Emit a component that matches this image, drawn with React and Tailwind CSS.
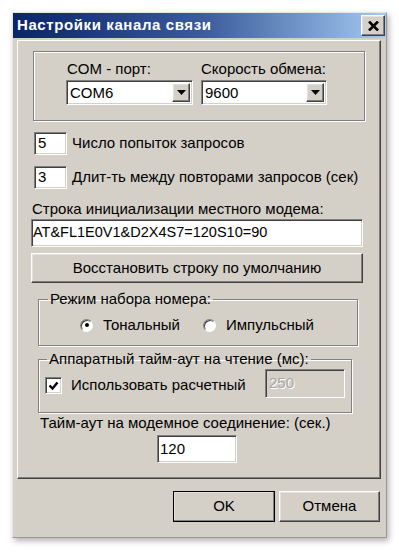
import React from 'react';

const font = "font-['Liberation_Sans',Arial,sans-serif]";

const sunken =
  'border border-t-[#808080] border-l-[#808080] border-b-white border-r-white shadow-[inset_1px_1px_0_#404040,inset_-1px_-1px_0_#d4d0c8]';
const raised =
  'border border-t-white border-l-white border-b-[#404040] border-r-[#404040] shadow-[inset_-1px_-1px_0_#808080,inset_1px_1px_0_#e4e1dc]';
const etched = 'border border-[#808080] shadow-[1px_1px_0_#fff,inset_1px_1px_0_#fff]';

const Combo = ({ value, width }) => (
  <div className={`${sunken} bg-white h-[25px] flex items-stretch p-[2px] ${width}`}>
    <div className="flex-1 flex items-center pl-[1px] text-[15px] leading-none">{value}</div>
    <div className={`${raised} bg-[#d4d0c8] w-[18px] flex items-center justify-center`}>
      <svg width="9" height="5" viewBox="0 0 9 5">
        <path d="M0 0h9L4.5 5z" fill="#000" />
      </svg>
    </div>
  </div>
);

const Edit = ({ value, className = '', disabled }) => (
  <div
    className={`${sunken} ${disabled ? 'bg-[#d4d0c8] text-[#a8a8a8] [text-shadow:1px_1px_0_#fff]' : 'bg-white'} flex items-center pl-[3px] ${className}`}
  >
    {value}
  </div>
);

const Radio = ({ checked, label, className = '' }) => (
  <div className={`flex items-center ${className}`}>
    <div className="w-[13px] h-[13px] rounded-full bg-white border border-t-[#808080] border-l-[#808080] border-b-white border-r-white shadow-[inset_1px_1px_0_#404040] flex items-center justify-center">
      {checked && <div className="w-[4px] h-[4px] rounded-full bg-black" />}
    </div>
    <span className="ml-[10px]">{label}</span>
  </div>
);

const Button = ({ children, className = '', isDefault }) => (
  <button
    className={`${isDefault ? 'outline outline-1 outline-black -outline-offset-1 ' : ''}${raised} bg-[#d4d0c8] flex items-center justify-center text-[15px] ${className}`}
  >
    {children}
  </button>
);

export default function App() {
  return (
    <div className={`w-[399px] h-[552px] bg-white pt-[12px] pl-[12px] text-black text-[15px] ${font}`}>
      <div className="w-[375px] h-[526px] bg-[#d4d0c8] border border-t-[#e8e6e2] border-l-[#e8e6e2] border-b-[#9a9894] border-r-[#9a9894] shadow-[2px_3px_6px_rgba(0,0,0,0.3)] flex flex-col">
        {/* Title bar */}
        <div className="h-[25px] bg-gradient-to-r from-[#0a246a] via-[#3a5a9a] to-[#a6caf0] flex items-center justify-between pl-[4px] pr-[1px]">
          <span className="text-white font-bold text-[15px] tracking-[0.6px]">Настройки канала связи</span>
          <div className={`${raised} bg-[#d4d0c8] w-[24px] h-[21px] flex items-center justify-center`}>
            <svg width="11" height="10" viewBox="0 0 11 10">
              <path d="M1 0.5l9 9M10 0.5l-9 9" stroke="#000" strokeWidth="2.6" />
            </svg>
          </div>
        </div>

        {/* Panel */}
        <div className="mt-[2px] ml-[4px] w-[364px] h-[439px] border border-t-white border-l-white border-b-[#404040] border-r-[#404040] shadow-[inset_-1px_-1px_0_#808080] flex flex-col">
          {/* COM group */}
          <div className={`${etched} mt-[10px] ml-[15px] w-[332px] h-[70px] flex gap-[8px] pl-[32px] pt-[8px]`}>
            <div className="flex flex-col">
              <span className="h-[18px] leading-[18px] pl-[1px]">COM - порт:</span>
              <div className="mt-[2px]">
                <Combo value="COM6" width="w-[127px]" />
              </div>
            </div>
            <div className="flex flex-col">
              <span className="h-[18px] leading-[18px]">Скорость обмена:</span>
              <div className="mt-[2px]">
                <Combo value="9600" width="w-[126px]" />
              </div>
            </div>
          </div>

          {/* Attempts */}
          <div className="mt-[11px] ml-[16px] flex items-center">
            <Edit value="5" className="w-[33px] h-[23px]" />
            <span className="ml-[5px]">Число попыток запросов</span>
          </div>
          <div className="mt-[11px] ml-[16px] flex items-center">
            <Edit value="3" className="w-[33px] h-[23px]" />
            <span className="ml-[5px]">Длит-ть между повторами запросов (сек)</span>
          </div>

          {/* Init string */}
          <span className="mt-[11px] ml-[14px] h-[18px] leading-[18px]">Строка инициализации местного модема:</span>
          <Edit value="AT&FL1E0V1&D2X4S7=120S10=90" className="mt-[1px] ml-[13px] w-[332px] h-[28px] !pl-[1px] text-[14.5px]" />
          <Button className="mt-[6px] ml-[13px] w-[332px] h-[30px]">Восстановить строку по умолчанию</Button>

          {/* Dial mode */}
          <fieldset className={`${etched} mt-[7px] ml-[20px] w-[320px] h-[56px] p-0`}>
            <legend className="ml-[9px] px-[2px] leading-[18px]">Режим набора номера:</legend>
            <div className="flex items-center h-[18px] mt-[8px] pl-[41px]">
              <Radio checked label="Тональный" />
              <Radio label="Импульсный" className="ml-[23px]" />
            </div>
          </fieldset>

          {/* Hardware timeout */}
          <fieldset className={`${etched} mt-[4px] ml-[20px] w-[314px] h-[63px] p-0`}>
            <legend className="ml-[8px] px-[2px] leading-[18px]">Аппаратный тайм-аут на чтение (мс):</legend>
            <div className="flex items-center mt-[1px] pl-[6px]">
              <div className={`${sunken} bg-white w-[17px] h-[17px] flex items-center justify-center mt-[4px]`}>
                <svg width="11" height="10" viewBox="0 0 11 10">
                  <path d="M1.5 4.5l3 3 5-6" fill="none" stroke="#000" strokeWidth="2.4" />
                </svg>
              </div>
              <span className="ml-[9px] mt-[4px]">Использовать расчетный</span>
              <Edit value="250" disabled className="ml-auto mr-[6px] w-[80px] h-[29px]" />
            </div>
          </fieldset>

          {/* Modem timeout */}
          <span className="mt-[1px] ml-[22px] h-[18px] leading-[18px]">Тайм-аут на модемное соединение: (сек.)</span>
          <Edit value="120" className="mt-[3px] ml-[139px] w-[80px] h-[28px] !pl-[2px]" />
        </div>

        {/* Buttons */}
        <div className="mt-[12px] flex justify-end gap-[4px] pr-[6px]">
          <Button isDefault className="w-[102px] h-[31px]">OK</Button>
          <Button className="w-[101px] h-[31px]">Отмена</Button>
        </div>
      </div>
    </div>
  );
}
